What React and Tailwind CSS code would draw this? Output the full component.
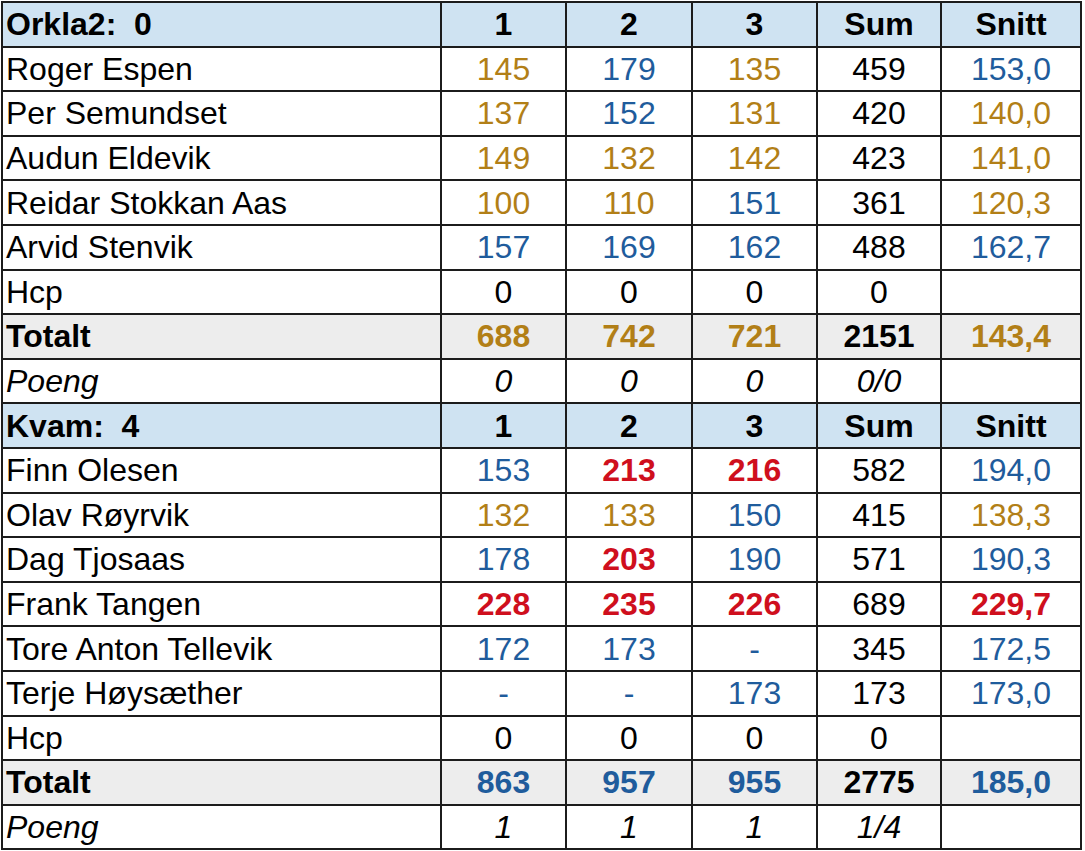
import React from "react";

// farger fra resultatlista
const G = "text-[#b27f17]";
const B = "text-[#1f5c9c]";
const R = "text-[#cf0f1d] font-bold";
const K = "text-black";

const teams = [
  {
    title: "Orkla2:  0",
    players: [
      ["Roger Espen", [["145", G], ["179", B], ["135", G], ["459", K], ["153,0", B]]],
      ["Per Semundset", [["137", G], ["152", B], ["131", G], ["420", K], ["140,0", G]]],
      ["Audun Eldevik", [["149", G], ["132", G], ["142", G], ["423", K], ["141,0", G]]],
      ["Reidar Stokkan Aas", [["100", G], ["110", G], ["151", B], ["361", K], ["120,3", G]]],
      ["Arvid Stenvik", [["157", B], ["169", B], ["162", B], ["488", K], ["162,7", B]]],
    ],
    total: [["688", G], ["742", G], ["721", G], ["2151", K], ["143,4", G]],
    poeng: ["0", "0", "0", "0/0", ""],
  },
  {
    title: "Kvam:  4",
    players: [
      ["Finn Olesen", [["153", B], ["213", R], ["216", R], ["582", K], ["194,0", B]]],
      ["Olav Røyrvik", [["132", G], ["133", G], ["150", B], ["415", K], ["138,3", G]]],
      ["Dag Tjosaas", [["178", B], ["203", R], ["190", B], ["571", K], ["190,3", B]]],
      ["Frank Tangen", [["228", R], ["235", R], ["226", R], ["689", K], ["229,7", R]]],
      ["Tore Anton Tellevik", [["172", B], ["173", B], ["-", B], ["345", K], ["172,5", B]]],
      ["Terje Høysæther", [["-", B], ["-", B], ["173", B], ["173", K], ["173,0", B]]],
    ],
    total: [["863", B], ["957", B], ["955", B], ["2775", K], ["185,0", B]],
    poeng: ["1", "1", "1", "1/4", ""],
  },
];

const Cell = ({ children, className = "", left = false }) => (
  <div
    className={`h-[44.6px] border-r-2 border-b-2 border-[#1c1c1c] flex items-center whitespace-pre ${
      left ? "pl-[3px]" : "justify-center"
    } ${className}`}
  >
    {children}
  </div>
);

const TeamBlock = ({ team }) => (
  <>
    {/* lagtopp */}
    <Cell left className="bg-[#cfe3f2] font-bold">{team.title}</Cell>
    {["1", "2", "3", "Sum", "Snitt"].map((h) => (
      <Cell key={h} className="bg-[#cfe3f2] font-bold">{h}</Cell>
    ))}

    {team.players.map(([name, vals]) => (
      <React.Fragment key={name}>
        <Cell left>{name}</Cell>
        {vals.map(([v, c], i) => (
          <Cell key={i} className={c}>{v}</Cell>
        ))}
      </React.Fragment>
    ))}

    <Cell left>Hcp</Cell>
    <Cell>0</Cell>
    <Cell>0</Cell>
    <Cell>0</Cell>
    <Cell>0</Cell>
    <Cell />

    <Cell left className="bg-[#ededed] font-bold">Totalt</Cell>
    {team.total.map(([v, c], i) => (
      <Cell key={i} className={`bg-[#ededed] font-bold ${c}`}>{v}</Cell>
    ))}

    <Cell left className="italic">Poeng</Cell>
    {team.poeng.map((v, i) => (
      <Cell key={i} className="italic">{v}</Cell>
    ))}
  </>
);

export default function App() {
  return (
    <div className="w-[1085px] h-[851px] bg-white overflow-hidden">
      <div
        className="ml-[1px] mt-[1px] w-fit grid grid-cols-[439px_125px_126px_125px_124px_140px] border-l-2 border-t-2 border-[#1c1c1c] text-[32px] leading-none text-black"
        style={{ fontFamily: '"Liberation Sans", Arial, sans-serif' }}
      >
        {teams.map((t) => (
          <TeamBlock key={t.title} team={t} />
        ))}
      </div>
    </div>
  );
}
